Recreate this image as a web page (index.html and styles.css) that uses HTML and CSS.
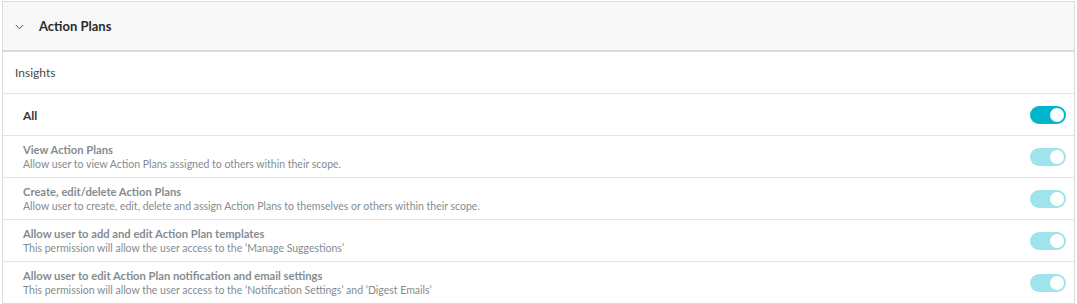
FILE: index.html
```html
<!DOCTYPE html>
<html>
<head>
<meta charset="utf-8">
<link rel="stylesheet" href="styles.css">
</head>
<body>
<div class="panel">
  <div class="panel-header">
    <svg class="chevron" width="9" height="6" viewBox="0 0 9 6"><path d="M0.8 1 L4.5 4.8 L8.2 1" fill="none" stroke="#555" stroke-width="1"/></svg>
    <span class="panel-title">Action Plans</span>
  </div>
  <div class="section">Insights</div>
  <div class="row row-all">
    <div class="row-text"><div class="all-label">All</div></div>
    <span class="toggle on"><span class="knob"></span></span>
  </div>
  <div class="row">
    <div class="row-text">
      <div class="row-title">View Action Plans</div>
      <div class="row-desc">Allow user to view Action Plans assigned to others within their scope.</div>
    </div>
    <span class="toggle dim"><span class="knob"></span></span>
  </div>
  <div class="row">
    <div class="row-text">
      <div class="row-title">Create, edit/delete Action Plans</div>
      <div class="row-desc">Allow user to create, edit, delete and assign Action Plans to themselves or others within their scope.</div>
    </div>
    <span class="toggle dim"><span class="knob"></span></span>
  </div>
  <div class="row">
    <div class="row-text">
      <div class="row-title">Allow user to add and edit Action Plan templates</div>
      <div class="row-desc">This permission will allow the user access to the ‘Manage Suggestions’</div>
    </div>
    <span class="toggle dim"><span class="knob"></span></span>
  </div>
  <div class="row">
    <div class="row-text">
      <div class="row-title">Allow user to edit Action Plan notification and email settings</div>
      <div class="row-desc">This permission will allow the user access to the ‘Notification Settings’ and ‘Digest Emails’</div>
    </div>
    <span class="toggle dim"><span class="knob"></span></span>
  </div>
</div>
</body>
</html>
```

FILE: styles.css
```css
html, body {
  margin: 0;
  padding: 0;
  background: #ffffff;
  font-family: Lato, "Open Sans", "Liberation Sans", sans-serif;
}
.panel {
  margin: 1px 2px 0 2px;
  border: 1px solid #dcdcdc;
  background: #fff;
}
.panel-header {
  height: 48px;
  background: #f8f8f8;
  border-bottom: 2px solid #d9dadb;
  display: flex;
  align-items: center;
  padding-left: 12px;
}
.chevron {
  margin-right: 15px;
  margin-top: 1px;
}
.panel-title {
  font-size: 13px;
  font-weight: 700;
  color: #2b2b2b;
}
.section {
  height: 41px;
  display: flex;
  align-items: center;
  padding-left: 12px;
  font-size: 12px;
  color: #4a4a4a;
  border-bottom: 1px solid #e3e4e6;
}
.row {
  height: 41px;
  display: flex;
  align-items: center;
  justify-content: space-between;
  padding-left: 20px;
  padding-right: 8px;
  border-bottom: 1px solid #e3e4e6;
}
.row:last-child {
  border-bottom: none;
}
.all-label {
  font-size: 12px;
  font-weight: 700;
  color: #383838;
  margin-top: 1px;
}
.row-title {
  font-size: 11.2px;
  font-weight: 700;
  color: #848c91;
  line-height: 15px;
}
.row-desc {
  font-size: 10.5px;
  color: #848c91;
  line-height: 14px;
}
.toggle {
  width: 36px;
  height: 18px;
  border-radius: 9px;
  display: flex;
  align-items: center;
  justify-content: flex-end;
  padding-right: 2px;
  box-sizing: border-box;
}
.toggle.on { background: #00b5cc; }
.toggle.dim { background: #9fe3ec; }
.knob {
  width: 14px;
  height: 14px;
  border-radius: 50%;
  background: #fff;
}
```
